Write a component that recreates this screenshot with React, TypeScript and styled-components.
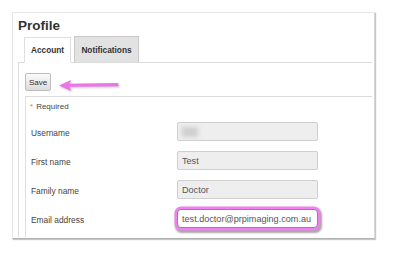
import React from "react";
import styled, { createGlobalStyle } from "styled-components";

const Global = createGlobalStyle`
  html, body { margin: 0; padding: 0; background: #ffffff; }
  body { font-family: "Liberation Sans", Arial, sans-serif; color: #333; }
`;

const Page = styled.div`
  width: 396px;
  height: 256px;
  padding: 12px 0 0 12px;
  box-sizing: border-box;
`;

const Card = styled.div`
  width: 363px;
  height: 227px;
  box-sizing: border-box;
  border: 1px solid #e6e6e6;
  border-bottom-color: #b0b0b0;
  border-right-color: #d8d8d8;
  box-shadow: 1px 1px 1px rgba(0, 0, 0, 0.22);
  padding: 5px 2px 1px 5px;
  display: flex;
  flex-direction: column;
  background: #fff;
`;

const Title = styled.h1`
  margin: 0;
  font-size: 13.5px;
  line-height: 16px;
  font-weight: bold;
  color: #333;
`;

const TabRow = styled.div`
  display: flex;
  align-items: flex-end;
  gap: 3px;
  margin: 2px 0 -1px 6px;
  position: relative;
  z-index: 1;
`;

const Tab = styled.div<{ $active?: boolean }>`
  box-sizing: border-box;
  height: ${(p) => (p.$active ? "26px" : "27px")};
  padding: 0 ${(p) => (p.$active ? "7px" : "6px")};
  display: flex;
  align-items: center;
  justify-content: center;
  font-size: 8.3px;
  font-weight: bold;
  color: #333;
  background: ${(p) => (p.$active ? "#fff" : "#e2e2e2")};
  border: 1px solid ${(p) => (p.$active ? "#dedede" : "#c9c9c9")};
  border-bottom: 1px solid ${(p) => (p.$active ? "#fff" : "#dcdcdc")};
  width: ${(p) => (p.$active ? "47px" : "65px")};
`;

const Panel = styled.div`
  flex: 1;
  position: relative;
  border-top: 1px solid #dcdcdc;
  border-left: 1px solid #dedede;
  padding: 10px 0 0 6px;
  display: flex;
  flex-direction: column;
`;

const SaveButton = styled.button`
  align-self: flex-start;
  width: 26px;
  height: 18px;
  box-sizing: border-box;
  padding: 0;
  font-family: "Liberation Sans", Arial, sans-serif;
  font-size: 8px;
  color: #333;
  border: 1px solid #bdbdbd;
  border-radius: 2px;
  background: linear-gradient(#fafafa, #dcdcdc);
`;

const Fieldset = styled.div`
  flex: 1;
  margin-top: 5px;
  border-top: 1px solid #dcdcdc;
  border-left: 1px solid #dedede;
  padding: 4px 0 0 5px;
  display: flex;
  flex-direction: column;
  gap: 10px;
`;

const Required = styled.div`
  font-size: 8px;
  line-height: 12px;
  color: #444;
  margin-bottom: -1px;
`;

const Star = styled.span`
  color: #e0813e;
  margin: 0 3px 0 -1px;
`;

const Row = styled.div`
  display: flex;
  align-items: center;
  height: 19px;
`;

const Label = styled.div`
  width: 146px;
  font-size: 8.4px;
  color: #444;
  padding-top: 3px;
`;

const Field = styled.div<{ $focus?: boolean }>`
  box-sizing: border-box;
  width: 141px;
  height: 19px;
  padding: 0 4px;
  display: flex;
  align-items: center;
  font-size: 9.1px;
  color: #555;
  background: ${(p) => (p.$focus ? "#fff" : "#eeeeee")};
  border: 1px solid ${(p) => (p.$focus ? "#8a8a8a" : "#cfcfcf")};
  border-radius: ${(p) => (p.$focus ? "4px" : "2px")};
  box-shadow: ${(p) =>
    p.$focus
      ? "0 0 0 2.5px #f07ff0, 1px 2px 2px 2.5px rgba(0,0,0,0.35)"
      : "none"};
  position: relative;
`;

const Redacted = styled.span`
  display: block;
  width: 16px;
  height: 10px;
  background: #cfcfcf;
  filter: blur(2px);
`;

const Arrow = styled.svg`
  position: absolute;
  left: 38px;
  top: 15px;
  width: 66px;
  height: 16px;
  overflow: visible;
`;

export default function App() {
  return (
    <>
      <Global />
      <Page>
        <Card>
          <Title>Profile</Title>
          <TabRow>
            <Tab $active>Account</Tab>
            <Tab>Notifications</Tab>
          </TabRow>
          <Panel>
            <SaveButton>Save</SaveButton>
            <Arrow viewBox="57 78 66 16">
              <path
                d="M60 86.5 L72 81 L70.5 84.8 L119 84 L119.5 87.2 L70.5 87.8 L72 92 Z"
                fill="rgba(0,0,0,0.25)"
                style={{ filter: "blur(0.8px)" }}
              />
              <path
                d="M59 85.5 L71 80 L69.5 83.8 L118 83 L118.5 86.2 L69.5 86.8 L71 91 Z"
                fill="#ee72e8"
              />
            </Arrow>
            <Fieldset>
              <Required>
                <Star>*</Star>Required
              </Required>
              <Row>
                <Label>Username</Label>
                <Field>
                  <Redacted />
                </Field>
              </Row>
              <Row>
                <Label>First name</Label>
                <Field>Test</Field>
              </Row>
              <Row>
                <Label>Family name</Label>
                <Field>Doctor</Field>
              </Row>
              <Row>
                <Label>Email address</Label>
                <Field $focus>test.doctor@prpimaging.com.au</Field>
              </Row>
            </Fieldset>
          </Panel>
        </Card>
      </Page>
    </>
  );
}
